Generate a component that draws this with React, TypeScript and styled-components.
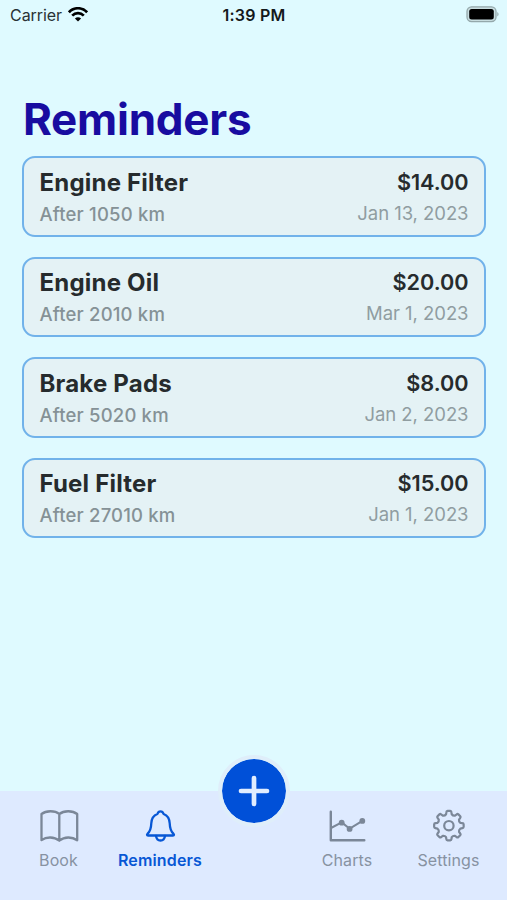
import React from 'react';
import styled, { createGlobalStyle } from 'styled-components';

const GlobalStyle = createGlobalStyle`
  * { box-sizing: border-box; }
  body {
    margin: 0;
    background: #dffaff;
    font-family: Inter, "Liberation Sans", sans-serif;
  }
`;

const Screen = styled.div`
  width: 507px;
  height: 900px;
  display: flex;
  flex-direction: column;
  background: #dffaff;
  overflow: hidden;
`;

const StatusBar = styled.header`
  height: 30px;
  padding: 0 7px 0 10px;
  display: grid;
  grid-template-columns: 1fr auto 1fr;
  align-items: center;
  color: #14191b;
  font-size: 16px;
  line-height: 30px;
`;

const Carrier = styled.div`
  display: flex;
  align-items: center;
  gap: 6px;
  letter-spacing: -0.05px;
  color: #293235;
  svg { margin-top: -1px; }
`;

const Clock = styled.div`
  margin-left: -2px;
  font-weight: 600;
  letter-spacing: 0.25px;
`;

const Battery = styled.div`
  display: flex;
  justify-content: flex-end;
  padding: 0 1px 2px 0;
`;

const Main = styled.main`
  flex: 1;
  padding: 64px 21px 0 22px;
`;

const Title = styled.h1`
  margin: 0 0 10.4px 1px;
  height: 52px;
  font-size: 44px;
  line-height: 51px;
  font-weight: 700;
  letter-spacing: -0.25px;
  color: #180ca0;
`;

const List = styled.div`
  display: grid;
  gap: 20px;
`;

const Card = styled.article`
  height: 80.4px;
  display: flex;
  justify-content: space-between;
  padding: 8.6px 15.5px 0;
  border: 2px solid #71b2ea;
  border-radius: 13px;
  background: #e4f2f5;
`;

const Column = styled.div<{ $end?: boolean }>`
  display: flex;
  flex-direction: column;
  align-items: ${(p) => (p.$end ? 'flex-end' : 'flex-start')};
  white-space: nowrap;
`;

const Name = styled.div`
  height: 32px;
  line-height: 31px;
  font-size: 24px;
  font-weight: 700;
  letter-spacing: 0.2px;
  color: #262b2d;
`;

const Price = styled(Name)`
  font-size: 21.7px;
  font-weight: 600;
  letter-spacing: -0.05px;
`;

const Distance = styled.div`
  height: 30px;
  line-height: 30px;
  font-size: 18.5px;
  font-weight: 500;
  letter-spacing: 0.18px;
  color: #859196;
`;

const DueDate = styled(Distance)`
  line-height: 29px;
  font-weight: 400;
  letter-spacing: -0.05px;
  color: #909da1;
`;

const TabBar = styled.nav`
  height: 109px;
  display: grid;
  grid-template-columns: 117px 86px 101px 86px 117px;
  background: #deeaff;
`;

const Tab = styled.a<{ $active?: boolean }>`
  display: flex;
  flex-direction: column;
  align-items: center;
  padding-top: 16px;
  font-size: 16px;
  line-height: 31px;
  font-weight: ${(p) => (p.$active ? 600 : 400)};
  letter-spacing: ${(p) => (p.$active ? '0.15px' : '0.1px')};
  color: ${(p) => (p.$active ? '#0757d5' : '#8792a2')};
  white-space: nowrap;
  svg { display: block; flex: none; }
`;

const AddButton = styled.button`
  justify-self: center;
  margin-top: -36px;
  margin-left: 1px;
  width: 72px;
  height: 72px;
  padding: 0;
  border: 4px solid #dfeefa;
  border-radius: 50%;
  background: #0050d8;
  background-clip: padding-box;
  display: grid;
  place-items: center;
`;

const outline = {
  fill: 'none',
  stroke: 'currentColor',
  strokeLinecap: 'round' as const,
  strokeLinejoin: 'round' as const,
};

const WifiIcon = () => (
  <svg width="20" height="15" viewBox="0 0 20 15" fill="none" stroke="#000" strokeWidth="2.7">
    <path d="M.9 5.3C6-.1 14-.1 19.1 5.3" />
    <path d="M4.2 8.6c3.3-3.4 8.3-3.4 11.6 0" />
    <path d="M10 14.5 6.9 11.4c1.7-1.7 4.5-1.7 6.2 0z" fill="#000" stroke="none" />
  </svg>
);

const BatteryIcon = () => (
  <svg width="33" height="18" viewBox="0 0 33 18">
    <rect x="1" y="1.8" width="29" height="14.8" rx="4.5" fill="#c8dde0" stroke="#94a8ab" strokeWidth="1.3" />
    <rect x="3.2" y="4" width="24.6" height="10.4" rx="2.5" fill="#000" />
    <path d="M31.3 7c1.7.7 1.7 3.7 0 4.4z" fill="#94a8ab" />
  </svg>
);

const BookIcon = () => (
  <svg width="40" height="38" viewBox="0 0 40 38" {...outline} strokeWidth="2.3" color="#7b8798">
    <path d="M20.3 7C16 3.3 7 3.3 2.5 7V33.2C7.5 29.5 15 29.5 20.3 33.7 25.5 29.5 33 29.5 38.2 33.2V7C33.7 3.3 24.7 3.3 20.3 7zM20.3 7V33.5" />
  </svg>
);

const BellIcon = () => (
  <svg width="40" height="38" viewBox="0 0 40 38" {...outline} strokeWidth="2.3">
    <path d="M20.5 4.4c-1.9 0-2.7 1.4-3.1 2.6-4.2 1.5-5.9 5-6.1 9.3-.2 5.7-.8 7.9-3.7 10.4-.8.8-.9 1.8.5 1.8h24.8c1.4 0 1.3-1 .5-1.8-2.9-2.5-3.5-4.7-3.7-10.4-.2-4.3-1.9-7.8-6.1-9.3-.4-1.2-1.2-2.6-3.1-2.6z" />
    <path d="M16 28.8c.4 3.2 2 4.7 4.5 4.7s4.1-1.5 4.5-4.7" />
  </svg>
);

const ChartIcon = () => (
  <svg width="40" height="38" viewBox="0 0 40 38" {...outline} strokeWidth="2.4" color="#7b8798">
    <path d="M3.8 4.8v28.4h33.5" />
    <path d="M4 21l10.7-5.6 8 6.3 12.7-7.9" strokeWidth="2" />
    <g fill="currentColor" stroke="none">
      <circle cx="14.7" cy="15.7" r="2.9" />
      <circle cx="22.6" cy="21.9" r="2.9" />
      <circle cx="35.3" cy="13.9" r="2.9" />
    </g>
  </svg>
);

const polar = (radius: number, degrees: number) => {
  const a = (degrees * Math.PI) / 180;
  return `${(19.9 + radius * Math.sin(a)).toFixed(2)} ${(18.7 - radius * Math.cos(a)).toFixed(2)}`;
};

const gearPath =
  Array.from({ length: 8 }, (_, i) => {
    const c = i * 45;
    return [
      `${i ? 'L' : 'M'}${polar(11.8, c - 14)}`,
      `L${polar(13.8, c - 10.5)}`,
      `Q${polar(14.8, c - 9.5)} ${polar(14.8, c - 5)}`,
      `L${polar(14.8, c + 5)}`,
      `Q${polar(14.8, c + 9.5)} ${polar(13.8, c + 10.5)}`,
      `L${polar(11.8, c + 14)}`,
      `Q${polar(10.6, c + 22.5)} ${polar(11.8, c + 31)}`,
    ].join('');
  }).join('') + 'Z';

const GearIcon = () => (
  <svg width="40" height="38" viewBox="0 0 40 38" {...outline} strokeWidth="2.2" color="#7b8798">
    <path d={gearPath} />
    <circle cx="19.9" cy="18.7" r="4.7" />
  </svg>
);

const PlusIcon = () => (
  <svg width="34" height="34" viewBox="0 0 34 34" fill="none" stroke="#e1edff" strokeWidth="4.7" strokeLinecap="round">
    <path d="M17 4v26M4 17h26" />
  </svg>
);

const reminders = [
  { name: 'Engine Filter', distance: 'After 1050 km', price: '$14.00', date: 'Jan 13, 2023' },
  { name: 'Engine Oil', distance: 'After 2010 km', price: '$20.00', date: 'Mar 1, 2023' },
  { name: 'Brake Pads', distance: 'After 5020 km', price: '$8.00', date: 'Jan 2, 2023' },
  { name: 'Fuel Filter', distance: 'After 27010 km', price: '$15.00', date: 'Jan 1, 2023' },
];

export default function App() {
  return (
    <Screen>
      <GlobalStyle />
      <StatusBar>
        <Carrier>Carrier <WifiIcon /></Carrier>
        <Clock>1:39 PM</Clock>
        <Battery><BatteryIcon /></Battery>
      </StatusBar>
      <Main>
        <Title>Reminders</Title>
        <List>
          {reminders.map((r) => (
            <Card key={r.name}>
              <Column>
                <Name>{r.name}</Name>
                <Distance>{r.distance}</Distance>
              </Column>
              <Column $end>
                <Price>{r.price}</Price>
                <DueDate>{r.date}</DueDate>
              </Column>
            </Card>
          ))}
        </List>
      </Main>
      <TabBar>
        <Tab><BookIcon />Book</Tab>
        <Tab $active><BellIcon />Reminders</Tab>
        <AddButton aria-label="Add"><PlusIcon /></AddButton>
        <Tab><ChartIcon />Charts</Tab>
        <Tab><GearIcon />Settings</Tab>
      </TabBar>
    </Screen>
  );
}
